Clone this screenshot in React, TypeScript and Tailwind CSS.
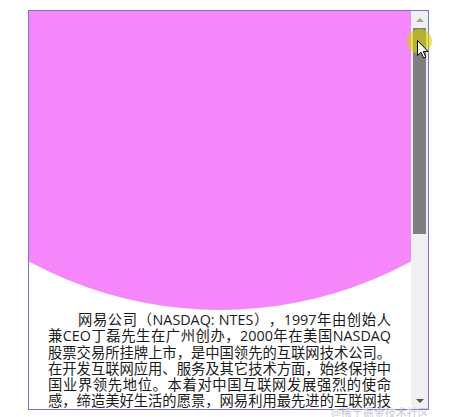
const lines = [
  '网易公司（NASDAQ: NTES），1997年由创始人',
  '兼CEO丁磊先生在广州创办，2000年在美国NASDAQ',
  '股票交易所挂牌上市，是中国领先的互联网技术公司。',
  '在开发互联网应用、服务及其它技术方面，始终保持中',
  '国业界领先地位。本着对中国互联网发展强烈的使命',
  '感，缔造美好生活的愿景，网易利用最先进的互联网技',
  '术，加强人与人之间信息的交流和共享，实现“网聚人',
  '的力量”。',
]

function Scrollbar() {
  return (
    <div className="flex w-[17px] shrink-0 flex-col bg-[#f0f0f0]">
      <div className="flex h-[17px] shrink-0 items-center justify-center">
        <div className="h-0 w-0 border-x-[4px] border-b-[4px] border-x-transparent border-b-[#a3a3a3]" />
      </div>
      <div className="flex flex-1 flex-col px-[2px]">
        <div className="h-[206px] bg-[#7f7f7f]" />
      </div>
      <div className="flex h-[17px] shrink-0 items-center justify-center">
        <div className="h-0 w-0 border-x-[4px] border-t-[4px] border-x-transparent border-t-[#555]" />
      </div>
    </div>
  )
}

export default function App() {
  return (
    <div className="relative h-[417px] w-[462px] overflow-hidden bg-white font-['Open_Sans','Noto_Sans_CJK_SC',sans-serif]">
      <div className="ml-[28px] mt-[10px] flex h-[400px] w-[401px] border border-[#7a70d6]">
        <div className="min-w-0 flex-1 overflow-hidden">
          <div className="flex h-[299px] items-end justify-center overflow-hidden">
            <div className="h-[800px] w-[800px] shrink-0 rounded-full bg-[#f587fb]" />
          </div>
          <div className="mt-[2px] w-[362px] pl-[19px] text-[14.3px] leading-[16.3px] text-[#1a1a1a] [text-spacing-trim:space-all]">
            {lines.map((line, i) => (
              <div
                key={i}
                className={`whitespace-nowrap text-justify ${
                  i === 0 ? 'pl-[30px]' : ''
                } ${i < lines.length - 1 ? '[text-align-last:justify]' : ''}`}
              >
                {line}
              </div>
            ))}
          </div>
        </div>
        <Scrollbar />
      </div>

      {/* cursor highlight */}
      <div className="absolute left-[407px] top-[29px] h-[25px] w-[25px] rounded-full bg-[#d8d200]/60" />
      <svg className="absolute left-[417px] top-[40px]" width="12" height="19" viewBox="0 0 12 19">
        <path
          d="M0.5 0.5 L0.5 15.5 L4 12.2 L6.6 18 L8.8 17 L6.3 11.4 L11 11.4 Z"
          fill="#fff"
          stroke="#000"
          strokeWidth="1"
          strokeLinejoin="round"
        />
      </svg>

      <span className="absolute left-[331px] top-[406px] text-[11px] leading-[13px] text-[#c4c7cc]">
        @稀土掘金技术社区
      </span>
    </div>
  )
}
